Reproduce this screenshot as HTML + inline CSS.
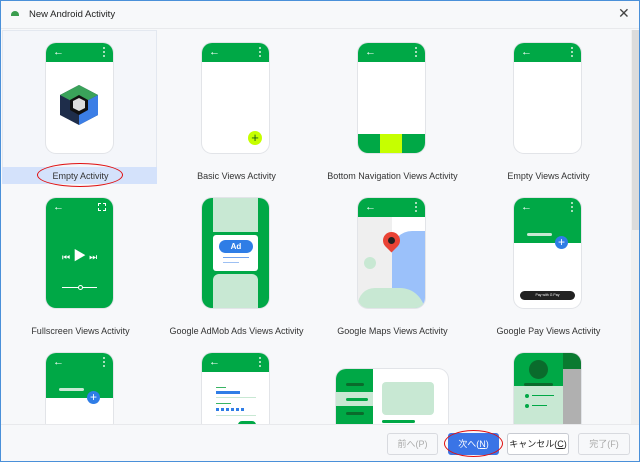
<!DOCTYPE html>
<html><head><meta charset="utf-8"><style>
*{box-sizing:border-box;margin:0;padding:0}
body{width:640px;height:462px;overflow:hidden;background:#f7f8fa;font-family:"Liberation Sans","Noto Sans CJK JP",sans-serif;position:relative;font-size:9px;color:#222}
.abs{position:absolute}
.frame{position:absolute;left:0;top:0;width:640px;height:462px;border:1px solid #4a90d9;pointer-events:none;z-index:20}
.title{left:0;top:0;width:640px;height:29px;background:#f7f8fa;border-bottom:1px solid #e8e9ec}
.ph{position:absolute;width:67px;height:110px;border-radius:10px;background:#fff;overflow:hidden;box-shadow:0 0 0 1px #e2e4e8}
.hd{position:absolute;left:0;top:0;width:100%;height:19px;background:#00a846}
.ar{position:absolute;left:7px;top:3px;color:#fff;font-size:11px;font-weight:bold;line-height:12px}
.dt{position:absolute;right:8px;top:4px;width:2px;height:10px;background:repeating-linear-gradient(#a6dfb9 0 2px,transparent 2px 4px)}
.lb{position:absolute;width:157px;text-align:center;font-size:9px;color:#333}
.btn{position:absolute;top:432px;height:22px;border:1px solid #d8dadf;border-radius:3px;background:#f7f8fa;font-size:9px;text-align:center;line-height:20px;color:#aaa}
</style></head><body>
<div class="frame"></div>
<div class="abs title">
 <div class="abs" style="left:11px;top:11px;width:8px;height:5px;background:#3a9c4e;border-radius:4px 4px 0 0"></div>
 <div class="abs" style="left:29px;top:9px;font-size:9.5px;color:#222">New Android Activity</div>
 <div class="abs" style="left:618px;top:5px;font-size:14px;color:#444">✕</div>
</div>
<!-- scrollbar -->
<div class="abs" style="left:631px;top:30px;width:8px;height:394px;background:#f0f0f0"></div>
<div class="abs" style="left:632px;top:30px;width:7px;height:200px;background:#dcdcdc"></div>
<!-- selection -->
<div class="abs" style="left:2px;top:30px;width:155px;height:154px;background:#f4f6fa;border:1px solid #e3e8f0"></div>
<div class="abs" style="left:2px;top:167px;width:155px;height:17px;background:#d4e2fb"></div>

<!-- row1 -->
<div class="ph" style="left:46px;top:43px"><div class="hd"><span class="ar">←</span><span class="dt"></span></div>
 <svg class="abs" style="left:12px;top:40px" width="42" height="44" viewBox="0 0 42 44"><polygon points="21,2 40,12 40,32 21,42 2,32 2,12" fill="#1e2d4a"/><polygon points="21,2 40,12 21,22 2,12" fill="#3aa35a"/><polygon points="40,12 40,32 21,42 21,22" fill="#3b7ee6"/><polygon points="21,12 30,17 30,27 21,32 12,27 12,17" fill="#111"/><polygon points="21,15 27,18 27,25 21,28 15,25 15,18" fill="#ddd"/></svg>
</div>
<div class="lb" style="left:2px;top:171px">Empty Activity</div>
<div class="abs" style="left:37px;top:163px;width:86px;height:24px;border:1.5px solid #e01010;border-radius:50%"></div>

<div class="ph" style="left:202px;top:43px"><div class="hd"><span class="ar">←</span><span class="dt"></span></div>
 <div class="abs" style="left:46px;top:88px;width:14px;height:14px;border-radius:50%;background:#c6ff00;color:#1a5a1a;font-size:13px;line-height:13px;text-align:center">+</div></div>
<div class="lb" style="left:158px;top:171px">Basic Views Activity</div>

<div class="ph" style="left:358px;top:43px"><div class="hd"><span class="ar">←</span><span class="dt"></span></div>
 <div class="abs" style="left:0;top:91px;width:67px;height:19px;background:#00a846"></div>
 <div class="abs" style="left:22px;top:91px;width:22px;height:19px;background:#c6ff00"></div></div>
<div class="lb" style="left:314px;top:171px">Bottom Navigation Views Activity</div>

<div class="ph" style="left:514px;top:43px"><div class="hd"><span class="ar">←</span><span class="dt"></span></div></div>
<div class="lb" style="left:470px;top:171px">Empty Views Activity</div>

<!-- row2 -->
<div class="ph" style="left:46px;top:198px;background:#00a846"><span class="ar">←</span>
 <div class="abs" style="right:7px;top:5px;width:8px;height:8px;border:1px dashed #fff"></div>
 <div class="abs" style="left:16px;top:47px;color:#fff;font-size:9px;letter-spacing:3px">⏮<span style="font-size:13px">▶</span>⏭</div>
 <div class="abs" style="left:16px;top:89px;width:35px;height:1px;background:#fff"></div>
 <div class="abs" style="left:32px;top:87px;width:5px;height:5px;border-radius:50%;background:#00a846;border:1px solid #fff"></div></div>
<div class="lb" style="left:2px;top:326px">Fullscreen Views Activity</div>

<div class="ph" style="left:202px;top:198px;background:#00a846">
 <div class="abs" style="left:11px;top:0;width:45px;height:34px;background:#c8e8d3"></div>
 <div class="abs" style="left:11px;top:76px;width:45px;height:34px;background:#c8e8d3;border-radius:6px 6px 0 0"></div>
 <div class="abs" style="left:11px;top:37px;width:45px;height:36px;background:#fff;border-radius:3px"></div>
 <div class="abs" style="left:17px;top:42px;width:34px;height:13px;border-radius:7px;background:#2f7de6;color:#fff;font-weight:bold;font-size:8px;text-align:center;line-height:13px">Ad</div>
 <div class="abs" style="left:21px;top:59px;width:26px;height:1px;background:#6ea1ee"></div>
 <div class="abs" style="left:21px;top:64px;width:16px;height:1px;background:#9dc0f3"></div></div>
<div class="lb" style="left:158px;top:326px">Google AdMob Ads Views Activity</div>

<div class="ph" style="left:358px;top:198px;background:#efefef"><div class="hd"><span class="ar">←</span><span class="dt"></span></div>
 <div class="abs" style="left:34px;top:19px;width:33px;height:91px;background:#fff"></div>
 <div class="abs" style="left:34px;top:33px;width:40px;height:80px;background:#9bc1fa;border-radius:20px 0 0 0"></div>
 <div class="abs" style="left:0;top:90px;width:67px;height:25px;background:#c8e8d3;border-radius:20px 30px 0 0"></div>
 <div class="abs" style="left:6px;top:59px;width:12px;height:12px;border-radius:50%;background:#c8e8d3"></div>
 <div class="abs" style="left:25px;top:34px;width:17px;height:17px;border-radius:50% 50% 50% 0;transform:rotate(-45deg);background:#e94335"></div>
 <div class="abs" style="left:30px;top:39px;width:7px;height:7px;border-radius:50%;background:#222"></div></div>
<div class="lb" style="left:314px;top:326px">Google Maps Views Activity</div>

<div class="ph" style="left:514px;top:198px"><div class="abs" style="left:0;top:0;width:67px;height:45px;background:#00a846"></div><span class="ar">←</span><span class="dt"></span>
 <div class="abs" style="left:13px;top:35px;width:25px;height:3px;border-radius:2px;background:#c8e8d3"></div>
 <div class="abs" style="left:41px;top:38px;width:13px;height:13px;border-radius:50%;background:#2f7de6;color:#fff;font-size:12px;line-height:13px;text-align:center">+</div>
 <div class="abs" style="left:6px;top:93px;width:55px;height:9px;border-radius:5px;background:#222;color:#fff;font-size:3.5px;line-height:9px;text-align:center">Pay with G Pay</div></div>
<div class="lb" style="left:470px;top:326px">Google Pay Views Activity</div>

<!-- row3 -->
<div class="ph" style="left:46px;top:353px;height:80px"><div class="abs" style="left:0;top:0;width:67px;height:45px;background:#00a846"></div><span class="ar">←</span><span class="dt"></span>
 <div class="abs" style="left:13px;top:35px;width:25px;height:3px;border-radius:2px;background:#c8e8d3"></div>
 <div class="abs" style="left:41px;top:38px;width:13px;height:13px;border-radius:50%;background:#2f7de6;color:#fff;font-size:12px;line-height:13px;text-align:center">+</div></div>
<div class="ph" style="left:202px;top:353px;height:80px"><div class="hd"><span class="ar">←</span><span class="dt"></span></div>
 <div class="abs" style="left:14px;top:34px;width:10px;height:1px;background:#3ab464"></div>
 <div class="abs" style="left:14px;top:38px;width:24px;height:3px;background:#2f7de6"></div>
 <div class="abs" style="left:14px;top:44px;width:40px;height:1px;background:#c8e8d3"></div>
 <div class="abs" style="left:14px;top:50px;width:15px;height:1px;background:#3ab464"></div>
 <div class="abs" style="left:14px;top:55px;width:30px;height:3px;background:repeating-linear-gradient(90deg,#2f7de6 0 3px,transparent 3px 5px)"></div>
 <div class="abs" style="left:14px;top:62px;width:40px;height:1px;background:#c8e8d3"></div>
 <div class="abs" style="left:36px;top:68px;width:18px;height:10px;border-radius:4px;background:#00a846"></div></div>
<div class="ph" style="left:336px;top:369px;width:112px;height:70px">
 <div class="abs" style="left:0;top:0;width:37px;height:70px;background:#00a846"></div>
 <div class="abs" style="left:0;top:23px;width:37px;height:14px;background:#c8e8d3"></div>
 <div class="abs" style="left:10px;top:14px;width:18px;height:3px;border-radius:2px;background:#0a6b2c"></div>
 <div class="abs" style="left:10px;top:29px;width:22px;height:3px;border-radius:2px;background:#00a846"></div>
 <div class="abs" style="left:10px;top:43px;width:18px;height:3px;border-radius:2px;background:#0a6b2c"></div>
 <div class="abs" style="left:46px;top:13px;width:52px;height:33px;border-radius:4px;background:#c8e8d3"></div>
 <div class="abs" style="left:46px;top:51px;width:33px;height:3px;border-radius:2px;background:#00a846"></div></div>
<div class="ph" style="left:514px;top:353px;height:80px;background:#b0b0b0">
 <div class="abs" style="left:0;top:0;width:49px;height:33px;background:#00a846"></div>
 <div class="abs" style="left:49px;top:0;width:18px;height:16px;background:#0a7a30"></div>
 <div class="abs" style="left:0;top:33px;width:49px;height:50px;background:#c8e8d3"></div>
 <div class="abs" style="left:15px;top:7px;width:19px;height:19px;border-radius:50%;background:#0a6b2c"></div>
 <div class="abs" style="left:10px;top:30px;width:29px;height:3px;border-radius:2px;background:#0a6b2c"></div>
 <div class="abs" style="left:11px;top:41px;width:4px;height:4px;border-radius:50%;background:#00a846"></div>
 <div class="abs" style="left:18px;top:42px;width:22px;height:1px;background:#00a846"></div>
 <div class="abs" style="left:11px;top:51px;width:4px;height:4px;border-radius:50%;background:#00a846"></div>
 <div class="abs" style="left:18px;top:52px;width:15px;height:1px;background:#00a846"></div></div>

<!-- bottom bar -->
<div class="abs" style="left:1px;top:424px;width:638px;height:37px;background:#f7f8fa;border-top:1px solid #e8e9ec;z-index:5">
 <div class="btn" style="left:386px;top:8px;width:51px">前へ(P)</div>
 <div class="btn" style="left:447px;top:8px;width:51px;background:#3a74e6;border-color:#3a74e6;color:#fff">次へ(<u>N</u>)</div>
 <div class="btn" style="left:506px;top:8px;width:62px;background:#fff;color:#222;border-color:#c8cbd2">キャンセル(<u>C</u>)</div>
 <div class="btn" style="left:577px;top:8px;width:52px">完了(F)</div>
 <div class="abs" style="left:443px;top:5px;width:59px;height:27px;border:1.5px solid #e01010;border-radius:50%"></div>
</div>
</body></html>
